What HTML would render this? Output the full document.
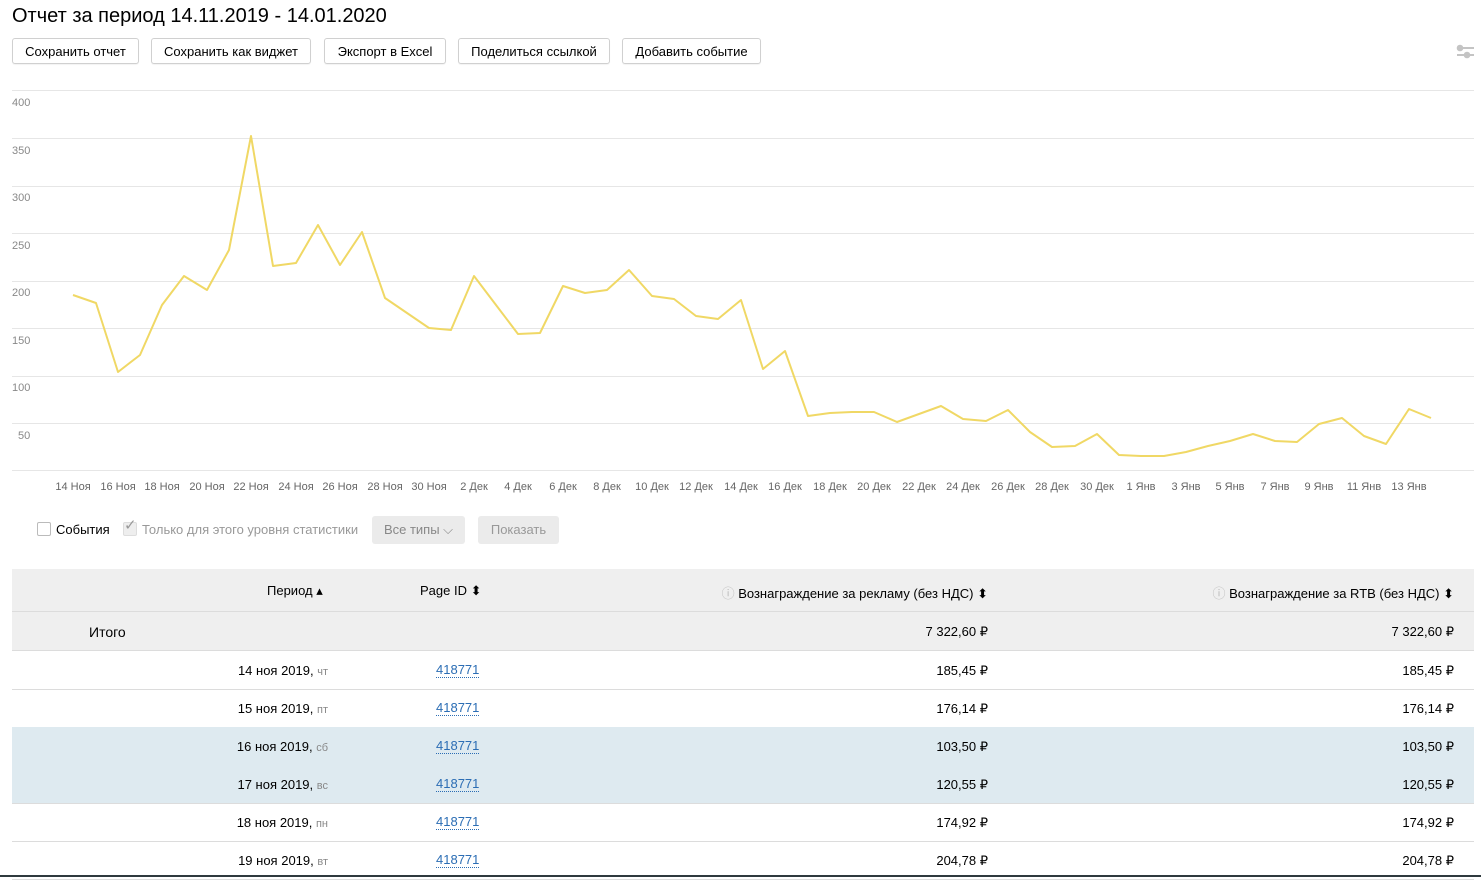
<!DOCTYPE html>
<html><head><meta charset="utf-8"><style>
body{margin:0;width:1481px;height:877px;overflow:hidden;background:#fff;font-family:"Liberation Sans",sans-serif;color:#000;position:relative}
.a{position:absolute;white-space:nowrap}
.btn{position:absolute;top:38px;height:26px;border:1px solid #d0d0d0;border-radius:3px;font-size:13px;line-height:26px;text-align:center;box-sizing:border-box;background:#fff;box-shadow:0 1px 1px rgba(0,0,0,.05)}
.row{position:absolute;left:12px;width:1462px;height:38px;border-bottom:1px solid #dcdcdc;font-size:13px}
.row span{position:absolute;top:12px;white-space:nowrap}
.d{right:1146px}
.d i{font-style:normal;color:#888;font-size:11px}
.id{left:424px;color:#2b6db4;border-bottom:1px dotted #2b6db4;line-height:14px}
.v1{right:486px}.v2{right:20px}
.hl{background:#deeaf0}
</style></head><body>
<div class="a" style="left:12px;top:5px;font-size:20px">Отчет за период 14.11.2019 - 14.01.2020</div>
<div class="btn" style="left:12px;width:127px">Сохранить отчет</div>
<div class="btn" style="left:151px;width:160px">Сохранить как виджет</div>
<div class="btn" style="left:324px;width:122px">Экспорт в Excel</div>
<div class="btn" style="left:458px;width:152px">Поделиться ссылкой</div>
<div class="btn" style="left:622px;width:139px">Добавить событие</div>
<svg class="a" style="left:1456px;top:44px" width="20" height="16"><g stroke="#c4c4c4" stroke-width="2" fill="#c4c4c4"><line x1="1" y1="4" x2="18" y2="4"/><line x1="1" y1="11" x2="18" y2="11"/><circle cx="4" cy="4" r="2.3"/><circle cx="11" cy="11" r="2.3"/></g></svg>
<svg class="a" style="left:0;top:80px" width="1481" height="420">
<g stroke="#e6e6e6" stroke-width="1">
<line x1="12" y1="10.5" x2="1474" y2="10.5"/><line x1="12" y1="58.5" x2="1474" y2="58.5"/><line x1="12" y1="106.5" x2="1474" y2="106.5"/><line x1="12" y1="153.5" x2="1474" y2="153.5"/><line x1="12" y1="201.5" x2="1474" y2="201.5"/><line x1="12" y1="248.5" x2="1474" y2="248.5"/><line x1="12" y1="296.5" x2="1474" y2="296.5"/><line x1="12" y1="343.5" x2="1474" y2="343.5"/><line x1="12" y1="390.5" x2="1474" y2="390.5"/></g>
<g font-size="11" fill="#888" font-family="Liberation Sans,sans-serif">
<text x="12" y="26">400</text><text x="12" y="74">350</text><text x="12" y="121">300</text><text x="12" y="169">250</text><text x="12" y="216">200</text><text x="12" y="264">150</text><text x="12" y="311">100</text><text x="18" y="359">50</text></g>
<g font-size="11" fill="#666" font-family="Liberation Sans,sans-serif" text-anchor="middle">
<text x="73" y="410">14 Ноя</text><text x="118" y="410">16 Ноя</text><text x="162" y="410">18 Ноя</text><text x="207" y="410">20 Ноя</text><text x="251" y="410">22 Ноя</text><text x="296" y="410">24 Ноя</text><text x="340" y="410">26 Ноя</text><text x="385" y="410">28 Ноя</text><text x="429" y="410">30 Ноя</text><text x="474" y="410">2 Дек</text><text x="518" y="410">4 Дек</text><text x="563" y="410">6 Дек</text><text x="607" y="410">8 Дек</text><text x="652" y="410">10 Дек</text><text x="696" y="410">12 Дек</text><text x="741" y="410">14 Дек</text><text x="785" y="410">16 Дек</text><text x="830" y="410">18 Дек</text><text x="874" y="410">20 Дек</text><text x="919" y="410">22 Дек</text><text x="963" y="410">24 Дек</text><text x="1008" y="410">26 Дек</text><text x="1052" y="410">28 Дек</text><text x="1097" y="410">30 Дек</text><text x="1141" y="410">1 Янв</text><text x="1186" y="410">3 Янв</text><text x="1230" y="410">5 Янв</text><text x="1275" y="410">7 Янв</text><text x="1319" y="410">9 Янв</text><text x="1364" y="410">11 Янв</text><text x="1409" y="410">13 Янв</text></g>
<polyline fill="none" stroke="#f0d865" stroke-width="2" stroke-linejoin="round" transform="translate(0,-80)" points="73,295 96,303 118,372 140,355 162,305 184,276 207,290 229,250 251,136 273,266 296,263 318,225 340,265 362,232 385,298 407,313 429,328 451,330 474,276 496,305 518,334 540,333 563,286 585,293 607,290 629,270 652,296 674,299 696,316 718,319 741,300 763,369 785,351 808,416 830,413 852,412 874,412 897,422 919,414 941,406 963,419 986,421 1008,410 1030,432 1052,447 1075,446 1097,434 1119,455 1141,456 1164,456 1186,452 1208,446 1230,441 1253,434 1275,441 1297,442 1319,424 1342,418 1364,436 1386,444 1409,409 1431,418"/>
</svg>
<div class="a" style="left:37px;top:522px;width:12px;height:12px;border:1px solid #bbb;border-radius:2px"></div>
<div class="a" style="left:56px;top:522px;font-size:13px">События</div>
<div class="a" style="left:123px;top:522px;width:12px;height:12px;border:1px solid #ddd;border-radius:2px;background:#eee"></div>
<div class="a" style="left:124px;top:516px;font-size:15px;color:#999">✓</div>
<div class="a" style="left:142px;top:522px;font-size:13px;color:#999">Только для этого уровня статистики</div>
<div class="a" style="left:372px;top:516px;width:93px;height:28px;background:#ebebeb;border-radius:3px;font-size:13px;color:#888;line-height:28px;text-align:center">Все типы ⌵</div>
<div class="a" style="left:478px;top:516px;width:81px;height:28px;background:#ebebeb;border-radius:3px;font-size:13px;color:#999;line-height:28px;text-align:center">Показать</div>
<div class="row" style="top:569px;height:42px;background:#efefef;border-bottom:1px solid #dcdcdc">
<span style="top:14px;left:255px">Период ▴</span><span style="top:14px;left:408px">Page ID ⬍</span>
<span style="top:14px;right:486px"><b style="font-weight:normal;color:#bbb">ⓘ</b> Вознаграждение за рекламу (без НДС) ⬍</span>
<span style="top:14px;right:20px"><b style="font-weight:normal;color:#bbb">ⓘ</b> Вознаграждение за RTB (без НДС) ⬍</span></div>
<div class="row" style="top:612px;background:#efefef"><span style="left:77px;font-size:14px">Итого</span><span class="v1">7 322,60 ₽</span><span class="v2">7 322,60 ₽</span></div>
<div class="row" style="top:651px"><span class="d">14 ноя 2019, <i>чт</i></span><span class="id">418771</span><span class="v1">185,45 ₽</span><span class="v2">185,45 ₽</span></div>
<div class="row" style="top:689px"><span class="d">15 ноя 2019, <i>пт</i></span><span class="id">418771</span><span class="v1">176,14 ₽</span><span class="v2">176,14 ₽</span></div>
<div class="row hl" style="top:727px"><span class="d">16 ноя 2019, <i>сб</i></span><span class="id">418771</span><span class="v1">103,50 ₽</span><span class="v2">103,50 ₽</span></div>
<div class="row hl" style="top:765px"><span class="d">17 ноя 2019, <i>вс</i></span><span class="id">418771</span><span class="v1">120,55 ₽</span><span class="v2">120,55 ₽</span></div>
<div class="row" style="top:803px"><span class="d">18 ноя 2019, <i>пн</i></span><span class="id">418771</span><span class="v1">174,92 ₽</span><span class="v2">174,92 ₽</span></div>
<div class="row" style="top:841px"><span class="d">19 ноя 2019, <i>вт</i></span><span class="id">418771</span><span class="v1">204,78 ₽</span><span class="v2">204,78 ₽</span></div>
<div class="a" style="left:0;top:875px;width:1481px;height:2px;background:#2f3a3e"></div>
</body></html>
